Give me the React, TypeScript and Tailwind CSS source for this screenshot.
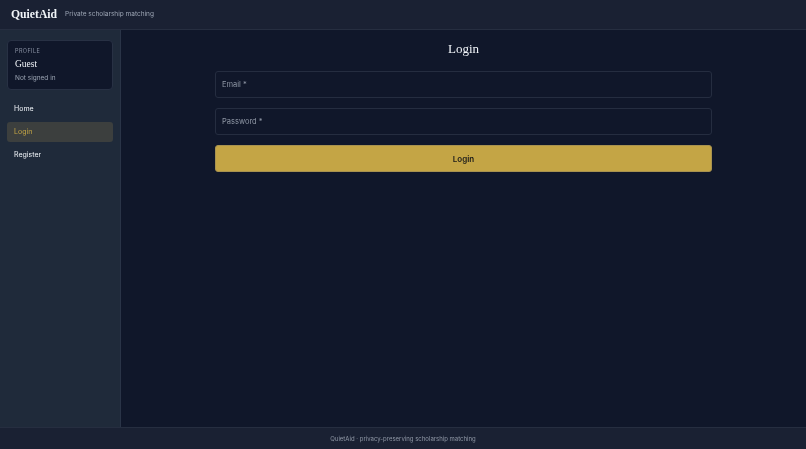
const sans = "font-['Inter',sans-serif]";
const serif = "font-['Liberation_Serif',serif]";

function Field({ label }: { label: string }) {
  return (
    <div className="h-[27px] rounded-[3px] border border-[#252d40] bg-[#10172a] px-[6px] flex items-center text-[7.5px] text-[#9098a6]">
      {label} *
    </div>
  );
}

export default function App() {
  return (
    <div className={`h-[449px] w-full flex flex-col bg-[#10172a] text-[#f1f5f9] antialiased will-change-transform ${sans}`}>
      {/* Header */}
      <header className="h-[30px] shrink-0 flex items-center gap-[8px] px-[11px] bg-[#1a2133] border-b border-[#262e40]">
        <span className={`${serif} text-[11.7px] font-bold`}>QuietAid</span>
        <span className="text-[6.5px] text-[#9ca5b4]">Private scholarship matching</span>
      </header>

      <div className="flex-1 flex min-h-0">
        {/* Sidebar */}
        <aside className="w-[121px] shrink-0 bg-[#1f2a3a] border-r border-[#2a3447] px-[7px] pt-[10px] flex flex-col">
          <div className="h-[50px] rounded-[4px] border border-[#283144] bg-[#10172a] px-[7px] pt-[6px] flex flex-col">
            <span className="text-[5.5px] tracking-[0.4px] text-[#8a92a3] leading-[9px]">PROFILE</span>
            <span className={`${serif} text-[9.5px] leading-[13px] mt-[2px]`}>Guest</span>
            <span className="text-[6.5px] text-[#9ca5b4] leading-[9px] mt-[3px]">Not signed in</span>
          </div>
          <nav className="mt-[9px] flex flex-col gap-[3px] text-[7px]">
            <div className="h-[20px] px-[7px] flex items-center rounded-[3px]">Home</div>
            <div className="h-[20px] px-[7px] flex items-center rounded-[3px] bg-[#3c3f3e] text-[#c4a545]">Login</div>
            <div className="h-[20px] px-[7px] flex items-center rounded-[3px]">Register</div>
          </nav>
        </aside>

        {/* Main */}
        <main className="flex-1 flex justify-center pt-[10px]">
          <div className="w-[497px] flex flex-col">
            <h1 className={`${serif} text-[13px] leading-[18px] text-center mb-[13px]`}>Login</h1>
            <div className="flex flex-col gap-[10px]">
              <Field label="Email" />
              <Field label="Password" />
              <button className="h-[27px] rounded-[3px] border border-[#a8924f] bg-[#c4a545] text-[8px] font-semibold text-[#1a1a1a]">
                Login
              </button>
            </div>
          </div>
        </main>
      </div>

      {/* Footer */}
      <footer className="h-[22px] shrink-0 flex items-center justify-center bg-[#1a2133] border-t border-[#262e40] text-[6px] text-[#9098a6]">
        QuietAid · privacy-preserving scholarship matching
      </footer>
    </div>
  );
}
